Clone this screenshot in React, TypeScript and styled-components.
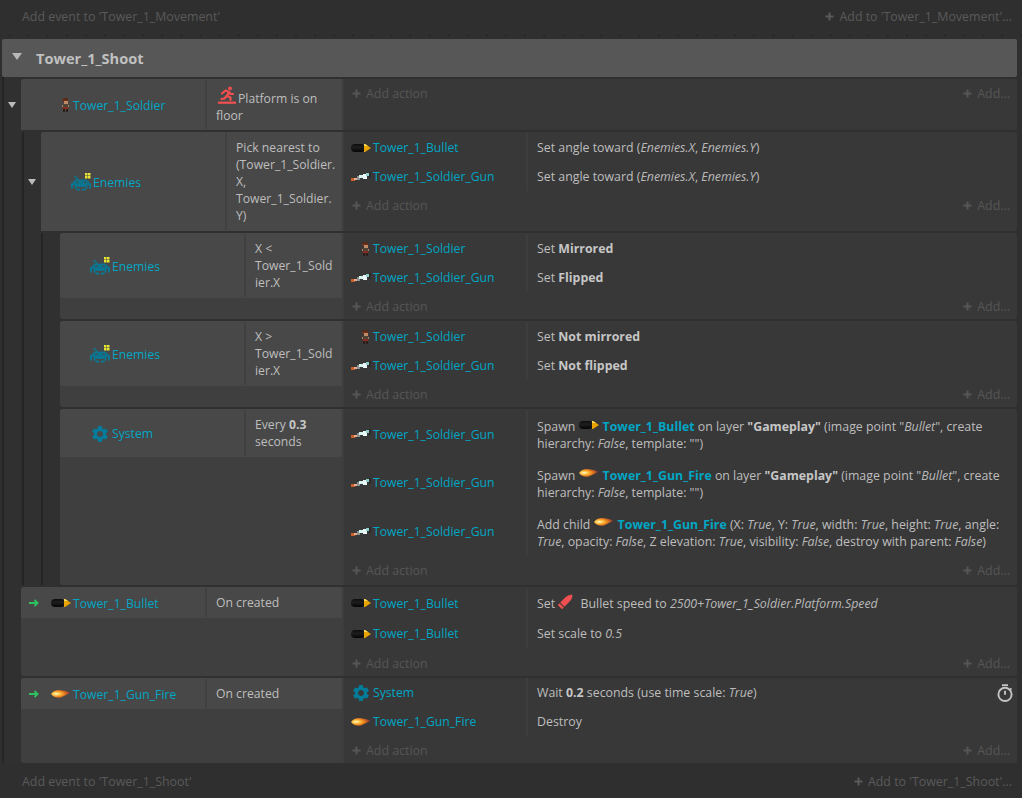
import React from 'react';
import styled, { createGlobalStyle } from 'styled-components';
import { MdSettings } from 'react-icons/md';

const GlobalStyle = createGlobalStyle`
  html, body {
    margin: 0;
    padding: 0;
    background: #2f2f2f;
  }
  body {
    font-family: "Open Sans", "Noto Sans", sans-serif;
    font-size: 12.2px;
    line-height: 17px;
    color: #bebebe;
  }
`;

/* ---------- object icons ---------- */

const BulletIcon = () => (
  <svg width="20" height="10" viewBox="0 0 20 10">
    <defs>
      <linearGradient id="bulletBody" x1="0" y1="0" x2="0" y2="1">
        <stop offset="0" stopColor="#0c0c0c" />
        <stop offset="0.4" stopColor="#1e1e1e" />
        <stop offset="1" stopColor="#050505" />
      </linearGradient>
    </defs>
    <rect x="0" y="1" width="14" height="8" rx="4" fill="url(#bulletBody)" />
    <path d="M13 1 L14 1 L20 5 L14 9 L13 9 Z" fill="#e8a400" />
    <path d="M13 1 L14 1 L17 3 L13 3 Z" fill="#ffdc60" />
  </svg>
);

const GunIcon = () => (
  <svg width="20" height="10" viewBox="0 0 20 10">
    <rect x="0" y="6" width="4" height="3" fill="#c8602c" />
    <rect x="3" y="6" width="3" height="2" fill="#e8b090" />
    <rect x="6" y="4" width="3" height="4" fill="#8a8f90" />
    <rect x="8" y="3" width="6" height="3" fill="#d8f4f0" />
    <rect x="12" y="2" width="4" height="5" fill="#eaf8f8" />
    <rect x="15" y="1" width="4" height="3" fill="#8fd0cc" />
    <rect x="18" y="0" width="2" height="6" fill="#2c2c2c" />
  </svg>
);

const SoldierIcon = () => (
  <svg width="9" height="14" viewBox="0 0 9 14">
    <rect x="1" y="0" width="5" height="2" fill="#5a2a18" />
    <rect x="0" y="2" width="6" height="2" fill="#6a3420" />
    <rect x="2" y="3" width="4" height="3" fill="#c08a64" />
    <rect x="1" y="6" width="5" height="3" fill="#4c4436" />
    <rect x="0" y="7" width="1" height="2" fill="#b8805a" />
    <rect x="6" y="7" width="1" height="2" fill="#b8805a" />
    <rect x="1" y="9" width="5" height="2" fill="#8a2a20" />
    <rect x="1" y="11" width="2" height="3" fill="#2c2018" />
    <rect x="4" y="11" width="2" height="3" fill="#2c2018" />
  </svg>
);

const FireIcon = () => (
  <svg width="20" height="10" viewBox="0 0 20 10">
    <defs>
      <radialGradient id="fireCore" cx="0.26" cy="0.5" r="0.74">
        <stop offset="0" stopColor="#fffbe0" />
        <stop offset="0.25" stopColor="#ffc848" />
        <stop offset="0.55" stopColor="#e8801c" />
        <stop offset="0.85" stopColor="#a04430" />
        <stop offset="1" stopColor="#6a3430" stopOpacity="0.3" />
      </radialGradient>
    </defs>
    <path d="M0 5 Q3 0.5 9 1 Q15 1.5 20 3.5 Q15 6 10 8.5 Q3 9.5 0 5 Z" fill="url(#fireCore)" />
  </svg>
);

const invaderRows = [
  '..#.....#..',
  '...#...#...',
  '..#######..',
  '.##.###.##.',
  '###########',
  '#.#######.#',
  '#.#.....#.#',
  '...##.##...',
];

const InvaderIcon = () => (
  <svg width="20" height="18" viewBox="0 0 20 18">
    <g fill="#047c99" transform="translate(0 3) scale(1.818 1.8)">
      {invaderRows.map((row, y) =>
        row.split('').map((cell, x) =>
          cell === '#' ? <rect key={`${x}-${y}`} x={x} y={y} width="1.02" height="1.02" /> : null,
        ),
      )}
    </g>
    <rect x="13" y="0" width="7" height="6.4" fill="#484848" />
    <g fill="#e6e633">
      <rect x="14" y="0" width="2.5" height="2.5" />
      <rect x="17" y="0" width="2.5" height="2.5" />
      <rect x="14" y="3" width="2.5" height="2.5" />
      <rect x="17" y="3" width="2.5" height="2.5" />
    </g>
  </svg>
);

const SystemIcon = () => <MdSettings size={20} color="#047c99" />;

const OnFloorIcon = () => (
  <svg width="18" height="18" viewBox="0 0 18 18">
    <g fill="none" stroke="#f25050" strokeWidth="2.2" strokeLinecap="round" strokeLinejoin="round">
      <path d="M4 7.5 L7.5 4.5 L11 6 L9 10 L12.5 11.5 L12.5 14" />
      <path d="M8.5 10 L6.5 12.5 L3.5 13" />
      <path d="M11 6 L12.5 8 L15 8" />
    </g>
    <circle cx="12" cy="2.4" r="1.9" fill="#f25050" />
    <rect x="0" y="15.6" width="18" height="2.2" fill="#f25050" />
  </svg>
);

const SpeedIcon = () => (
  <svg width="15" height="15" viewBox="0 0 15 15">
    <g fill="#f25050" transform="rotate(45 7.5 7.5)">
      <path d="M4.5 5 Q4.5 0 7.5 -2 Q10.5 0 10.5 5 L10.5 12 L4.5 12 Z" />
      <rect x="4.5" y="13" width="6" height="2.4" />
    </g>
  </svg>
);

const ArrowIcon = () => (
  <svg width="10" height="8" viewBox="0 0 10 8">
    <path d="M0 4 H8 M5.5 1 L8.6 4 L5.5 7" fill="none" stroke="#2fc060" strokeWidth="1.8" />
  </svg>
);

const PlusIcon = () => (
  <svg width="9" height="9" viewBox="0 0 9 9">
    <path d="M4.5 0.5 V8.5 M0.5 4.5 H8.5" stroke="currentColor" strokeWidth="2" />
  </svg>
);

const StopwatchIcon = () => (
  <svg width="18" height="18" viewBox="0 0 18 18">
    <g fill="none" stroke="#c4c4c4" strokeWidth="1.9">
      <circle cx="9" cy="10.4" r="6.6" />
      <path d="M6 1.2 H12" />
      <path d="M9 6.8 V10.8" />
      <path d="M14.2 4.4 L15.4 5.6" />
    </g>
  </svg>
);

/* ---------- page ---------- */

const Page = styled.div`
  width: 1022px;
  height: 798px;
  overflow: hidden;
  display: flex;
  flex-direction: column;
  background: #2f2f2f;
`;

const AddBar = styled.div<{ $height: number; $dots?: boolean }>`
  height: ${p => p.$height}px;
  box-sizing: border-box;
  flex: none;
  display: flex;
  align-items: center;
  justify-content: space-between;
  padding: 0 10px 0 22px;
  font-size: 12.4px;
  color: #5a5a5a;
  ${p =>
    p.$dots
      ? `background: radial-gradient(circle, #1f1f1f 0.9px, transparent 1.1px) 0 100% / 19.1px 7px repeat-x;
         padding-bottom: 6px;`
      : ''}
`;

const AddLink = styled.span`
  display: inline-flex;
  align-items: center;
  gap: 5px;
`;

const Group = styled.div`
  margin: 0 5px 0 2px;
`;

const GroupHeader = styled.div`
  height: 38px;
  display: flex;
  align-items: center;
  background: #575757;
  border-radius: 2px;
  font-size: 14.6px;
  font-weight: 700;
  color: #c0c0c0;
  padding-left: 10px;
`;

const GroupArrow = styled.span`
  width: 0;
  height: 0;
  margin: -3px 14px 0 0;
  border-left: 5px solid transparent;
  border-right: 5px solid transparent;
  border-top: 7px solid #b8b8b8;
`;

const GroupBody = styled.div`
  padding: 2px 0 0 17px;
  border-left: 2px solid #252525;
  background: #303030;
`;

const Block = styled.div`
  margin-bottom: 2px;

  &:last-child {
    margin-bottom: 0;
  }
`;

const Nested = styled.div<{ $offset: number }>`
  margin-top: 2px;
  margin-left: ${p => p.$offset}px;
  padding-left: 17px;
  border-left: 2px solid #252525;
`;

const EventRow = styled.div`
  position: relative;
  display: flex;
  align-items: stretch;
`;

const Toggle = styled.span`
  position: absolute;
  left: -13px;
  top: 50%;
  margin-top: -3px;
  width: 0;
  height: 0;
  border-left: 4px solid transparent;
  border-right: 4px solid transparent;
  border-top: 6px solid #bcbcbc;
`;

const Conditions = styled.div<{ $width: number }>`
  flex: 0 0 ${p => p.$width}px;
  background: #3f3f3f;
  border-radius: 3px 0 0 3px;
`;

const ConditionRow = styled.div`
  display: flex;
  align-items: stretch;
  background: #484848;
  border-radius: 3px 0 0 0;
`;

const ConditionObject = styled.div`
  flex: 0 0 184px;
  display: flex;
  align-items: center;
  padding-top: 1px;
  box-sizing: border-box;
`;

const Divider = styled.div`
  flex: 0 0 2px;
  margin: 1px 0;
  background: #404040;
`;

const ConditionText = styled.div`
  flex: 1;
  min-width: 0;
  padding: 7px 5px 7px 9px;
`;

const FloorCondition = styled.div`
  margin-bottom: -1px;
`;

const TriggerSlot = styled.span`
  flex: 0 0 30px;
  display: flex;
  align-items: center;
  padding-left: 8px;
  box-sizing: border-box;
`;

const ObjectIcon = styled.span`
  flex: 0 0 22px;
  display: flex;
  align-items: center;
  justify-content: flex-end;
  padding-right: 2px;
  box-sizing: border-box;
`;

const ObjectName = styled.span`
  color: #00a6c4;
  white-space: nowrap;
`;

const Actions = styled.div<{ $top: number; $bottom: number }>`
  position: relative;
  flex: 1;
  min-width: 0;
  padding: ${p => p.$top}px 0 ${p => p.$bottom}px;
  background: #383838;
  border-left: 2px solid #3d3d3d;
  border-radius: 0 2px 2px 0;
`;

const ActionRow = styled.div<{ $height: number }>`
  display: flex;
  align-items: stretch;
  min-height: ${p => p.$height}px;
`;

const ActionObject = styled.div`
  flex: 0 0 175px;
  display: flex;
  align-items: center;
  padding-left: 7px;
`;

const ActionDivider = styled.div`
  flex: 0 0 2px;
  background: #3d3d3d;
`;

const ActionText = styled.div<{ $lines?: number }>`
  flex: 1;
  min-width: 0;
  align-self: center;
  font-size: 12.35px;
  padding: ${p => (p.$lines === 2 ? 2 : 0)}px 10px 0 9px;
`;

const AddActionRow = styled.div`
  height: 27px;
  box-sizing: border-box;
  display: flex;
  align-items: center;
  justify-content: space-between;
  padding: 0 7px 0 8px;
  font-size: 12.4px;
  color: #565656;

  ${ActionRow} + & {
    padding-top: 2px;
  }
`;

const TimerBadge = styled.span`
  position: absolute;
  top: 6px;
  right: 3px;
  display: flex;
`;

const InlineIcon = styled.span`
  display: inline-block;
  margin: -5px 4px -5px 0;
  vertical-align: middle;
  line-height: 0;
  position: relative;
  top: -3px;
`;

const FloorIcon = styled.span`
  display: inline-block;
  margin: 0 2px -1px 2px;
  vertical-align: -1px;
  line-height: 0;
`;

const StrongName = styled.b`
  color: #00a6c4;
  font-weight: 700;
`;

const Strong = styled.b`
  font-weight: 700;
  color: #c6c6c6;
`;

const Param = styled.i`
  color: #b8b8b8;
`;

/* ---------- data ---------- */

interface ActionData {
  icon: React.ReactNode;
  name: string;
  text: React.ReactNode;
  height?: number;
  lines?: number;
}

interface EventData {
  icon: React.ReactNode;
  name: string;
  condition: React.ReactNode;
  width: number;
  actions: ActionData[];
  toggle?: boolean;
  trigger?: boolean;
  timer?: boolean;
  offset?: number;
  bottom?: number;
  children?: EventData[];
}

const angle = (
  <>
    Set angle toward (<Param>Enemies.X</Param>, <Param>Enemies.Y</Param>)
  </>
);

const spawn = (icon: React.ReactNode, name: string) => (
  <>
    Spawn <InlineIcon>{icon}</InlineIcon>
    <StrongName>{name}</StrongName> on layer <Strong>"Gameplay"</Strong> (image point "<Param>Bullet</Param>", create
    hierarchy: <Param>False</Param>, template: "")
  </>
);

const soldier = <SoldierIcon />;
const gun = <GunIcon />;
const bullet = <BulletIcon />;
const fire = <FireIcon />;
const invader = <InvaderIcon />;
const system = <SystemIcon />;

const events: EventData[] = [
  {
    icon: soldier,
    name: 'Tower_1_Soldier',
    width: 321,
    toggle: true,
    offset: 1,
    condition: (
      <FloorCondition>
        <FloorIcon>
          <OnFloorIcon />
        </FloorIcon>
        Platform is on floor
      </FloorCondition>
    ),
    actions: [],
    children: [
      {
        icon: invader,
        name: 'Enemies',
        width: 301,
        toggle: true,
        offset: 0,
        condition: (
          <>
            Pick nearest to (Tower_1_Soldier.<wbr />X, Tower_1_Soldier.<wbr />Y)
          </>
        ),
        actions: [
          { icon: bullet, name: 'Tower_1_Bullet', text: angle },
          { icon: gun, name: 'Tower_1_Soldier_Gun', text: angle },
        ],
        children: [
          {
            icon: invader,
            name: 'Enemies',
            width: 282,
            condition: (
              <>
                X &lt; Tower_1_Sold<wbr />ier.X
              </>
            ),
            actions: [
              { icon: soldier, name: 'Tower_1_Soldier', text: <>Set <Strong>Mirrored</Strong></> },
              { icon: gun, name: 'Tower_1_Soldier_Gun', text: <>Set <Strong>Flipped</Strong></> },
            ],
          },
          {
            icon: invader,
            name: 'Enemies',
            width: 282,
            condition: (
              <>
                X &gt; Tower_1_Sold<wbr />ier.X
              </>
            ),
            actions: [
              { icon: soldier, name: 'Tower_1_Soldier', text: <>Set <Strong>Not mirrored</Strong></> },
              { icon: gun, name: 'Tower_1_Soldier_Gun', text: <>Set <Strong>Not flipped</Strong></> },
            ],
          },
          {
            icon: system,
            name: 'System',
            width: 282,
            bottom: 2,
            condition: <>Every <Strong>0.3</Strong> seconds</>,
            actions: [
              { icon: gun, name: 'Tower_1_Soldier_Gun', height: 48, lines: 2, text: spawn(bullet, 'Tower_1_Bullet') },
              { icon: gun, name: 'Tower_1_Soldier_Gun', height: 49, lines: 2, text: spawn(fire, 'Tower_1_Gun_Fire') },
              {
                icon: gun,
                name: 'Tower_1_Soldier_Gun',
                height: 49,
                lines: 2,
                text: (
                  <>
                    Add child <InlineIcon>{fire}</InlineIcon>
                    <StrongName>Tower_1_Gun_Fire</StrongName> (X: <Param>True</Param>, Y: <Param>True</Param>, width:{' '}
                    <Param>True</Param>, height: <Param>True</Param>, angle: <Param>True</Param>, opacity:{' '}
                    <Param>False</Param>, Z elevation: <Param>True</Param>, visibility: <Param>False</Param>, destroy
                    with parent: <Param>False</Param>)
                  </>
                ),
              },
            ],
          },
        ],
      },
    ],
  },
  {
    icon: bullet,
    name: 'Tower_1_Bullet',
    width: 321,
    trigger: true,
    condition: 'On created',
    actions: [
      {
        icon: bullet,
        name: 'Tower_1_Bullet',
        height: 30,
        text: (
          <>
            Set <InlineIcon><SpeedIcon /></InlineIcon> Bullet speed to <Param>2500+Tower_1_Soldier.Platform.Speed</Param>
          </>
        ),
      },
      { icon: bullet, name: 'Tower_1_Bullet', height: 31, text: <>Set scale to <Param>0.5</Param></> },
    ],
  },
  {
    icon: fire,
    name: 'Tower_1_Gun_Fire',
    width: 321,
    trigger: true,
    timer: true,
    condition: 'On created',
    actions: [
      {
        icon: system,
        name: 'System',
        text: <>Wait <Strong>0.2</Strong> seconds (use time scale: <Param>True</Param>)</>,
      },
      { icon: fire, name: 'Tower_1_Gun_Fire', text: 'Destroy' },
    ],
  },
];

const AddLabel = ({ text }: { text: string }) => (
  <AddLink>
    <PlusIcon />
    {text}
  </AddLink>
);

const EventBlock = ({ event }: { event: EventData }) => (
  <Block>
    <EventRow>
      {event.toggle && <Toggle />}
      <Conditions $width={event.width}>
        <ConditionRow>
          <ConditionObject>
            <TriggerSlot>{event.trigger && <ArrowIcon />}</TriggerSlot>
            <ObjectIcon>{event.icon}</ObjectIcon>
            <ObjectName>{event.name}</ObjectName>
          </ConditionObject>
          <Divider />
          <ConditionText>{event.condition}</ConditionText>
        </ConditionRow>
      </Conditions>
      <Actions $top={event.timer ? 0 : 1} $bottom={event.bottom ?? 0}>
        {event.actions.map((action, i) => (
          <ActionRow key={i} $height={action.height ?? 29}>
            <ActionObject>
              <ObjectIcon>{action.icon}</ObjectIcon>
              <ObjectName>{action.name}</ObjectName>
            </ActionObject>
            <ActionDivider />
            <ActionText $lines={action.lines}>{action.text}</ActionText>
          </ActionRow>
        ))}
        <AddActionRow>
          <AddLabel text="Add action" />
          <AddLabel text="Add..." />
        </AddActionRow>
        {event.timer && (
          <TimerBadge>
            <StopwatchIcon />
          </TimerBadge>
        )}
      </Actions>
    </EventRow>
    {event.children && (
      <Nested $offset={event.offset ?? 0}>
        {event.children.map((child, i) => (
          <EventBlock key={i} event={child} />
        ))}
      </Nested>
    )}
  </Block>
);

export default function App() {
  return (
    <Page>
      <GlobalStyle />
      <AddBar $height={39} $dots>
        <span>Add event to 'Tower_1_Movement'</span>
        <AddLabel text="Add to 'Tower_1_Movement'..." />
      </AddBar>
      <Group>
        <GroupHeader>
          <GroupArrow />
          Tower_1_Shoot
        </GroupHeader>
        <GroupBody>
          {events.map((event, i) => (
            <EventBlock key={i} event={event} />
          ))}
        </GroupBody>
      </Group>
      <AddBar $height={36}>
        <span>Add event to 'Tower_1_Shoot'</span>
        <AddLabel text="Add to 'Tower_1_Shoot'..." />
      </AddBar>
    </Page>
  );
}
